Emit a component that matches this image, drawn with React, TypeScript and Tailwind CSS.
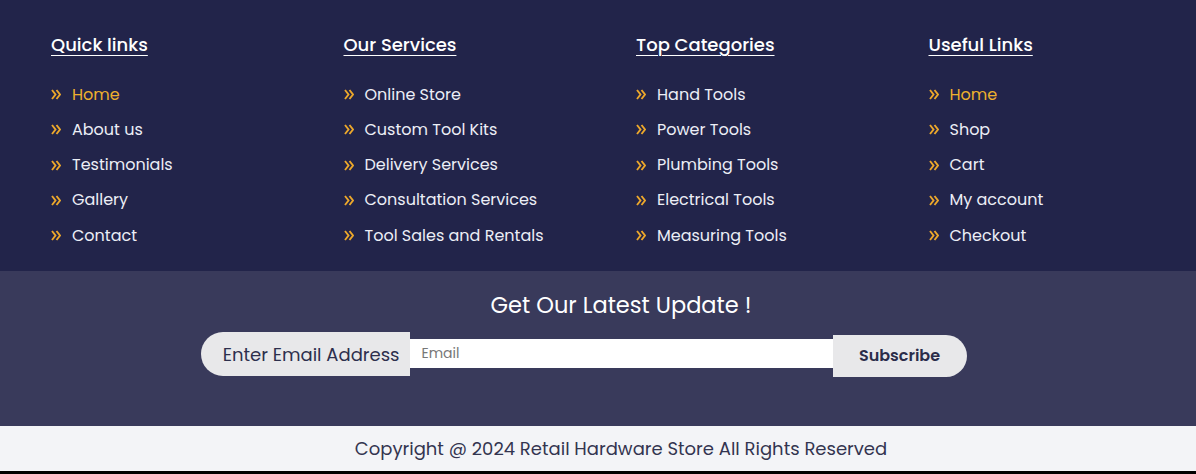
import React from "react";

const cols = [
  { title: "Quick links", items: ["Home", "About us", "Testimonials", "Gallery", "Contact"], active: 0 },
  { title: "Our Services", items: ["Online Store", "Custom Tool Kits", "Delivery Services", "Consultation Services", "Tool Sales and Rentals"], active: -1 },
  { title: "Top Categories", items: ["Hand Tools", "Power Tools", "Plumbing Tools", "Electrical Tools", "Measuring Tools"], active: -1 },
  { title: "Useful Links", items: ["Home", "Shop", "Cart", "My account", "Checkout"], active: 0 },
];

function Chevrons() {
  return (
    <svg width="10" height="11" viewBox="0 0 10 11" className="mr-[11px] shrink-0" fill="none" stroke="#eda82b" strokeWidth="1.9" strokeLinejoin="miter">
      <polyline points="1,1 4.5,5.5 1,10" />
      <polyline points="5.5,1 9,5.5 5.5,10" />
    </svg>
  );
}

export default function App() {
  return (
    <div className="w-[1196px] h-[474px] overflow-hidden" style={{ fontFamily: "Poppins, Inter, 'Open Sans', sans-serif" }}>
      <div className="bg-[#22244a] h-[271px] pl-[51px] pt-[34px]">
        <div className="grid grid-cols-[292.5px_292.5px_292.5px_1fr]">
          {cols.map((c) => (
            <div key={c.title}>
              <h3 className="text-[18px] leading-[22px] font-medium text-white underline underline-offset-[4px] decoration-[1px] mb-[21px]">{c.title}</h3>
              <ul>
                {c.items.map((it, i) => (
                  <li key={it} className="h-[35.25px] flex items-center text-[16px]">
                    <Chevrons />
                    <span className={i === c.active ? "text-[#eeb02e]" : "text-[#eceef6]"}>{it}</span>
                  </li>
                ))}
              </ul>
            </div>
          ))}
        </div>
      </div>
      <div className="bg-[#393a5b] h-[155px] flex flex-col items-center">
        <h2 className="text-white text-[22.5px] leading-[30px] mt-[19px] ml-[46px]">Get Our Latest Update !</h2>
        <div className="flex items-start mt-[12px] ml-[-29px]">
          <div className="h-[44px] w-[209px] bg-[#e8e8ea] rounded-l-[22px] flex items-center justify-end pr-[10px] text-[18px] text-[#2d2f4d]">Enter Email Address</div>
          <div className="h-[29px] w-[423px] bg-white flex items-center pl-[12px] text-[14px] text-[#777] mt-[7px]">Email</div>
          <div className="h-[42px] w-[134px] bg-[#e8e8ea] rounded-r-[21px] flex items-center justify-center text-[16px] font-semibold text-[#2b2d4a] mt-[3px]">Subscribe</div>
        </div>
      </div>
      <div className="bg-[#f3f4f7] h-[45px] flex items-center justify-center text-[18px] text-[#333550] pl-[46px]">
        Copyright @ 2024 Retail Hardware Store All Rights Reserved
      </div>
      <div className="bg-black h-[3px]"></div>
    </div>
  );
}
